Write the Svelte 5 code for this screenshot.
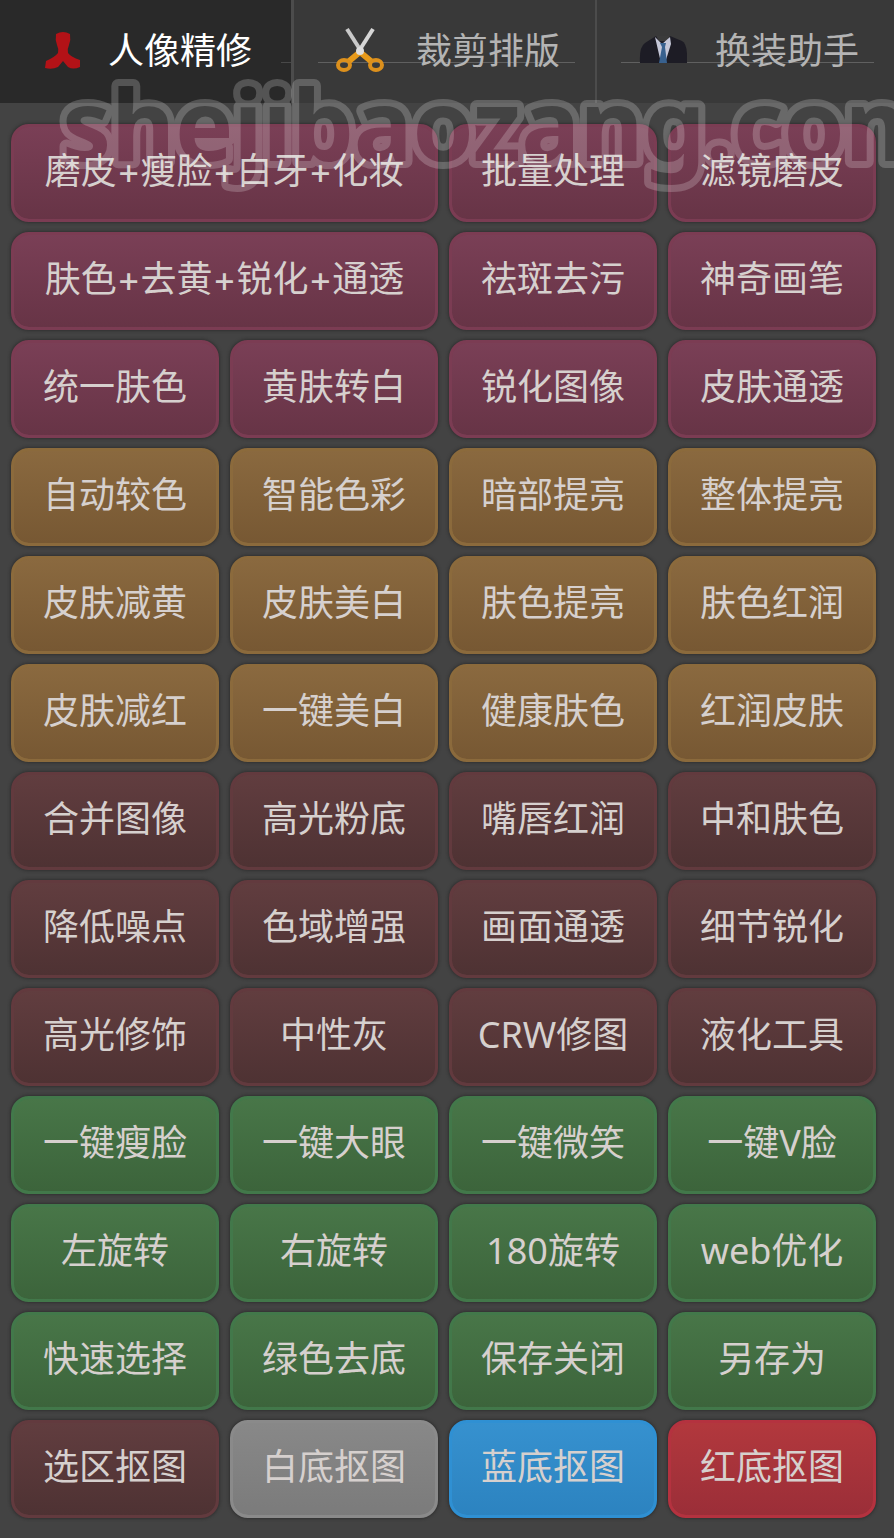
<script lang="ts">
  type Tone = 'rose' | 'gold' | 'wine' | 'green' | 'grey' | 'blue' | 'red';

  interface Action {
    label: string;
    tone: Tone;
    wide?: boolean;
  }

  const tabs = [
    { id: 'retouch', label: '人像精修' },
    { id: 'crop', label: '裁剪排版' },
    { id: 'outfit', label: '换装助手' }
  ];

  const row = (tone: Tone, ...labels: string[]): Action[] =>
    labels.map((label) => ({ label, tone }));

  const actions: Action[] = [
    { label: '磨皮+瘦脸+白牙+化妆', tone: 'rose', wide: true },
    ...row('rose', '批量处理', '滤镜磨皮'),
    { label: '肤色+去黄+锐化+通透', tone: 'rose', wide: true },
    ...row('rose', '祛斑去污', '神奇画笔'),
    ...row('rose', '统一肤色', '黄肤转白', '锐化图像', '皮肤通透'),
    ...row('gold', '自动较色', '智能色彩', '暗部提亮', '整体提亮'),
    ...row('gold', '皮肤减黄', '皮肤美白', '肤色提亮', '肤色红润'),
    ...row('gold', '皮肤减红', '一键美白', '健康肤色', '红润皮肤'),
    ...row('wine', '合并图像', '高光粉底', '嘴唇红润', '中和肤色'),
    ...row('wine', '降低噪点', '色域增强', '画面通透', '细节锐化'),
    ...row('wine', '高光修饰', '中性灰', 'CRW修图', '液化工具'),
    ...row('green', '一键瘦脸', '一键大眼', '一键微笑', '一键V脸'),
    ...row('green', '左旋转', '右旋转', '180旋转', 'web优化'),
    ...row('green', '快速选择', '绿色去底', '保存关闭', '另存为'),
    { label: '选区抠图', tone: 'wine' },
    { label: '白底抠图', tone: 'grey' },
    { label: '蓝底抠图', tone: 'blue' },
    { label: '红底抠图', tone: 'red' }
  ];

  let current = $state('retouch');
</script>

<main class="panel">
  <nav class="tabs">
    {#each tabs as tab (tab.id)}
      <button
        class="tab {tab.id}"
        class:active={current === tab.id}
        aria-pressed={current === tab.id}
        onclick={() => (current = tab.id)}
      >
        {#if tab.id === 'retouch'}
          <svg width="38" height="48" viewBox="0 0 38 48" aria-hidden="true">
            <path
              d="M14 7 Q21 3 28 7 Q29 13 27 18 Q25 22 26 26 Q29 30 38 33 V40 Q31 43 26 40 L21 34 L16 40 Q10 43 3 41 L4 34 Q13 30 16 26 Q17 22 15 18 Q13 13 14 7Z"
              fill="#b31217"
            />
          </svg>
        {:else if tab.id === 'crop'}
          <svg width="52" height="48" viewBox="0 0 52 48" aria-hidden="true">
            <path d="M11 2 L25 24" stroke="#c9c9c9" stroke-width="4" />
            <path d="M37 2 L23 24" stroke="#d6d6d6" stroke-width="4" />
            <path d="M24 25 L12 35 M24 25 L36 35" stroke="#e79a1b" stroke-width="6" />
            <ellipse cx="8" cy="38" rx="6" ry="5" fill="none" stroke="#dc901d" stroke-width="4" />
            <ellipse cx="40" cy="38" rx="6" ry="5" fill="none" stroke="#dc901d" stroke-width="4" />
            <circle cx="24" cy="24" r="4" fill="#dedede" />
          </svg>
        {:else}
          <svg width="48" height="48" viewBox="0 0 48 48" aria-hidden="true">
            <path d="M1 36 Q0 20 6 16 L17 9 H31 L43 14 Q49 17 48 36 Z" fill="#1d1c25" />
            <path d="M17 9 H31 L28 14 H20Z" fill="#3b3b3b" />
            <path d="M16 10 L23 17 L31 10 L32 17 L26 36 H22 Z" fill="#c5c7d8" />
            <path d="M21 16 H27 L26 20 L28 36 H20 L23 20Z" fill="#38618f" />
          </svg>
        {/if}
        <span>{tab.label}</span>
      </button>
    {/each}
  </nav>

  <div class="actions">
    {#each actions as action (action.label)}
      <button class="action {action.tone}" class:wide={action.wide}>{action.label}</button>
    {/each}
  </div>

  <svg class="watermark" width="100%" height="210" aria-hidden="true">
    <!-- keep only the part of the stroke outside the letters -->
    <mask id="outside" maskUnits="userSpaceOnUse" x="0" y="0" width="2000" height="210">
      <rect width="2000" height="210" fill="white" />
      <text x="62" y="161" fill="black">shejibaozang.com</text>
    </mask>
    <g mask="url(#outside)" opacity="0.2">
      <text class="ring" x="62" y="161">shejibaozang.com</text>
    </g>
  </svg>
</main>

<style>
  :global(body) {
    margin: 0;
    background: #434343;
  }

  .panel {
    position: relative;
    overflow: hidden;
    font-family: 'Noto Sans', 'Noto Sans CJK SC', sans-serif;
  }

  button {
    margin: 0;
    font-family: inherit;
    font-size: 36px;
    font-weight: 400;
    line-height: 48px;
    white-space: nowrap;
    cursor: pointer;
  }

  .tabs {
    display: grid;
    grid-template-columns: 294fr 303fr 297fr;
    background: #393939;
  }

  .tab {
    position: relative;
    display: flex;
    align-items: center;
    gap: 28px;
    height: 103px;
    padding: 0 0 2px 42px;
    border: 0;
    border-right: 2px solid #4c4c4c;
    background: #393939;
    color: #b4b4b4;
  }

  .tab:last-child {
    border-right: 0;
  }

  .tab svg,
  .tab span {
    position: relative;
    flex: none;
  }

  .tab::before {
    content: '';
    position: absolute;
    top: 62px;
    left: 24px;
    right: 20px;
    height: 1px;
    background: #606060;
  }

  .tab.active {
    border-right-width: 3px;
    background: #292929;
    color: #fff;
  }

  .tab.active::before {
    left: auto;
    right: 0;
    width: 10px;
    background: #484848;
  }

  .actions {
    display: grid;
    grid-template-columns: repeat(4, minmax(0, 1fr));
    gap: 10px 11px;
    padding: 21px 18px 20px 11px;
  }

  .action {
    height: 98px;
    padding: 0 0 4px;
    border: 3px solid var(--edge);
    border-radius: 18px;
    background: linear-gradient(var(--top), var(--bottom)) padding-box, var(--edge);
    box-shadow: 0 0 3px 1px rgba(30, 30, 30, 0.5);
    color: #d6d0ce;
  }

  /* Inter carries the wider plus sign */
  .wide {
    grid-column: span 2;
    font-family: Inter, 'Noto Sans CJK SC', sans-serif;
  }

  .rose {
    --top: #7a3f56;
    --bottom: #673446;
    --edge: #7b3c53;
  }

  .gold {
    --top: #8a693f;
    --bottom: #775833;
    --edge: #8b6a3c;
  }

  .wine {
    --top: #613d3f;
    --bottom: #4e3233;
    --edge: #623a3e;
  }

  .green {
    --top: #487648;
    --bottom: #3c643b;
    --edge: #42784a;
  }

  .grey {
    --top: #888;
    --bottom: #7b7b7b;
    --edge: #8a8a8a;
  }

  .blue {
    --top: #3691cf;
    --bottom: #2c83c0;
    --edge: #2f90d3;
  }

  .red {
    --top: #b2383d;
    --bottom: #9b2e38;
    --edge: #b4323f;
  }

  .watermark {
    position: absolute;
    top: 0;
    left: 0;
    pointer-events: none;
    font-family: 'Noto Sans', sans-serif;
    font-size: 98px;
    font-weight: 700;
  }

  .ring {
    fill: #fff;
    stroke: #fff;
    stroke-width: 14px;
    stroke-linejoin: round;
  }
</style>
